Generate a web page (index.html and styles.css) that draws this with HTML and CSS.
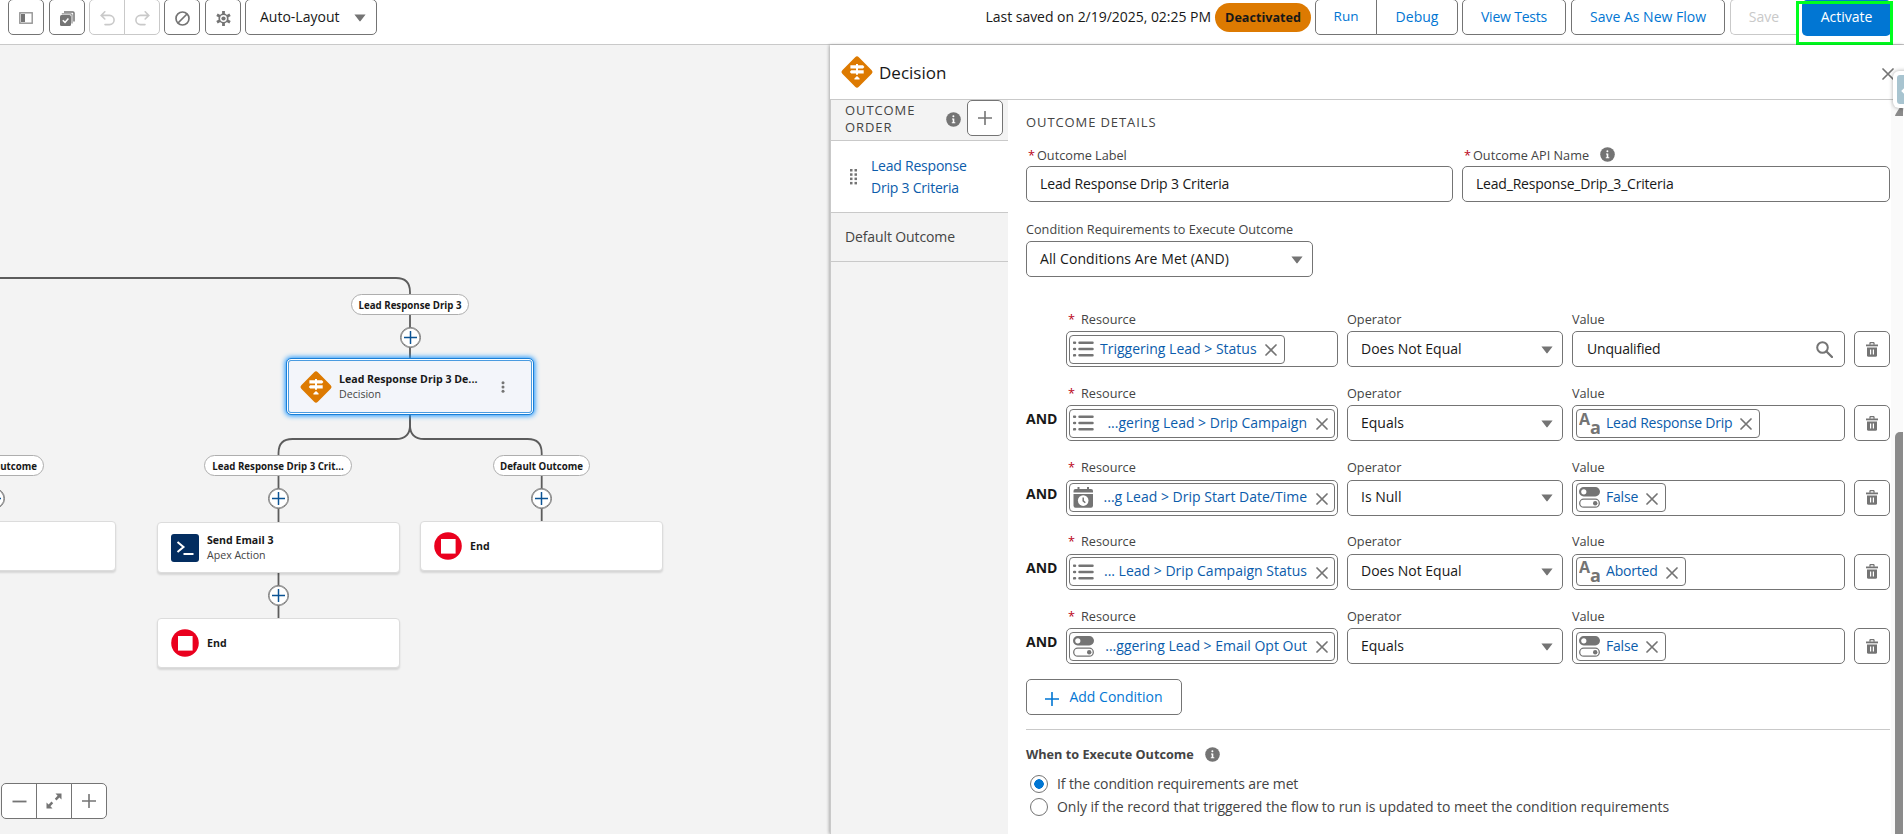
FILE: index.html
```html
<html>
	<head>
	<meta charset="utf-8">
	<title>Flow Builder</title>
	<link rel="stylesheet" href="styles.css">
	</head>
	<body>
	<svg class="defs">
		<symbol id="x" viewBox="0 0 12 12"><path d="M1 1L11 11M11 1L1 11" stroke="currentColor" stroke-width="1.7" stroke-linecap="round"/></symbol>
		<symbol id="plus" viewBox="0 0 14 14"><path d="M7 .5V13.5M.5 7H13.5" stroke="currentColor" stroke-width="1.6" stroke-linecap="round"/></symbol>
		<symbol id="info" viewBox="0 0 15 15"><circle cx="7.5" cy="7.5" r="7.3" fill="#747474"/><circle cx="7.4" cy="4.3" r="1" fill="#fff"/><path d="M6 6.4H8.3V10.3H9.3V11.2H5.8V10.3H6.7V7.4H6Z" fill="#fff"/></symbol>
		<symbol id="list" viewBox="0 0 21 16"><path d="M1 1.7H2M1 8H2M1 14.3H2M6.5 1.7H19.5M6.5 8H19.5M6.5 14.3H19.5" stroke="#747474" stroke-width="2.5" stroke-linecap="round"/></symbol>
		<symbol id="toggle" viewBox="0 0 21 21"><rect x="0" y="0" width="21" height="9.5" rx="4.7" fill="#747474"/><circle cx="4.8" cy="4.8" r="2.6" fill="#fff"/><rect x=".7" y="12.2" width="19.6" height="8" rx="4" fill="#fff" stroke="#747474" stroke-width="1.3"/><circle cx="16.2" cy="16.2" r="2.2" fill="#747474"/></symbol>
		<symbol id="text" viewBox="0 0 21 21"><text class="aa" x="0" y="11.5" font-size="16">A</text><text class="aa" x="11" y="20.5" font-size="18">a</text></symbol>
		<symbol id="date" viewBox="0 0 21 21"><path d="M5.5 0V4M15 0V4" stroke="#747474" stroke-width="2"/><path d="M.5 5.5V4Q.5 2 2.5 2H18Q20 2 20 4V5.5Z" fill="#747474"/><path d="M.5 7H20V18.5Q20 20.7 18 20.7H2.5Q.5 20.7 .5 18.5Z" fill="#747474"/><circle cx="10.2" cy="13.6" r="5.3" fill="#fff"/><path d="M10.2 10.5V13.8L12.3 15.7" fill="none" stroke="#747474" stroke-width="1.5"/></symbol>
		<symbol id="trash" viewBox="0 0 12 15"><path d="M4 2.8V1.2Q4 .6 4.6 .6H7.4Q8 .6 8 1.2V2.8" fill="none" stroke="#747474" stroke-width="1.3"/><path d="M0 2.5H12V4.3H0Z" fill="#747474"/><path d="M1 5.6H11V13.3Q11 14.8 9.5 14.8H2.5Q1 14.8 1 13.3Z" fill="#747474"/><path d="M4.6 7.5V12.5M7.4 7.5V12.5" stroke="#fff" stroke-width="1.2"/></symbol>
		<symbol id="down" viewBox="0 0 12 8"><path d="M.4 .4H11.6L6.6 7Q6 7.8 5.4 7Z" fill="#747474"/></symbol>
		<symbol id="decision" viewBox="0 0 34 34"><rect x="5.3" y="5.3" width="23.4" height="23.4" rx="2.6" fill="#dd7a01" transform="rotate(45 17 17)"/><path d="M16 9H18V10.2H23L24.4 11.9L23 13.6H18V15.2H23.7V18.6H18V19.7H16V18.6H11.2L9.8 16.9L11.2 15.2H16V13.6H10.4V10.2H16ZM17 21L19.6 23.4V24.4H14.4V23.4Z" fill="#fff"/></symbol>
		<symbol id="end" viewBox="0 0 28 28"><circle cx="14" cy="14" r="13.8" fill="#ea001e"/><rect x="7" y="7" width="14.6" height="14.6" fill="#fff"/></symbol>
	</svg>

	<div class="toolbar">
		<button class="btn icon-btn"><svg width="14" height="12"><rect x=".8" y=".8" width="12.4" height="10.4" fill="none" stroke="#939393" stroke-width="1.4"/><rect x="2" y="2" width="4" height="8" fill="#747474"/></svg></button>
		<button class="btn icon-btn"><svg width="15" height="15"><path d="M4 .9H13Q14 .9 14 1.9V10.5" fill="none" stroke="#747474" stroke-width="1.5"/><path d="M1.8 2.9H11Q12 2.9 12 3.9V12.5" fill="none" stroke="#747474" stroke-width="1"/><rect x="0" y="4" width="11" height="11" rx="1.5" fill="#747474"/><path d="M2.8 9.2L5 11.4L8.4 7.4" fill="none" stroke="#fff" stroke-width="1.5"/></svg></button>
		<div class="group">
			<button class="btn icon-btn off"><svg width="15" height="15"><path d="M4.8 .8L1.2 4.4L4.8 8M1.4 4.4H9.5A4.6 4.6 0 0 1 9.5 13.6H5" fill="none" stroke="#c9c9c9" stroke-width="1.6" stroke-linecap="round"/></svg></button>
			<button class="btn icon-btn off"><svg width="15" height="15"><path d="M10.2 .8L13.8 4.4L10.2 8M13.6 4.4H5.5A4.6 4.6 0 0 0 5.5 13.6H10" fill="none" stroke="#c9c9c9" stroke-width="1.6" stroke-linecap="round"/></svg></button>
		</div>
		<button class="btn icon-btn"><svg width="15" height="15"><circle cx="7.5" cy="7.5" r="6.5" fill="none" stroke="#747474" stroke-width="1.7"/><path d="M3 12L12 3" stroke="#747474" stroke-width="1.7"/></svg></button>
		<button class="btn icon-btn"><svg width="15" height="15"><circle cx="7.5" cy="7.5" r="5" fill="#747474"/><path d="M7.5 0V15M1 3.75L14 11.25M14 3.75L1 11.25" stroke="#747474" stroke-width="2.8"/><circle cx="7.5" cy="7.5" r="3.4" fill="#fff"/><circle cx="7.5" cy="7.5" r="2.1" fill="#747474"/></svg></button>
		<button class="btn layout"><span>Auto-Layout</span><svg width="12" height="8"><use href="#down"/></svg></button>
		<span class="saved">Last saved on 2/19/2025, 02:25 PM</span>
		<span class="badge">Deactivated</span>
		<div class="group run-group">
			<button class="btn blue run">Run</button>
			<button class="btn blue debug">Debug</button>
		</div>
		<button class="btn blue tests">View Tests</button>
		<button class="btn blue saveas">Save As New Flow</button>
		<button class="btn off save">Save</button>
		<button class="btn activate">Activate</button>
		<div class="highlight"></div>
	</div>

	<div class="main">
		<div class="canvas">
			<svg class="lines" width="830" height="789" fill="none" stroke="#5c5c5c" stroke-width="1.8">
				<path d="M0 233H396Q410 233 410 247V313"/>
				<path d="M410 369V380Q410 394 396 394H292.5Q278.5 394 278.5 408V573"/>
				<path d="M410 369V380Q410 394 424 394H527.7Q541.7 394 541.7 408V480"/>
			</svg>
			<div class="pill-label l1">Lead Response Drip 3</div>
			<div class="pill-label l2">Lead Response Drip 3 Crit...</div>
			<div class="pill-label l3">Default Outcome</div>
			<div class="pill-label l4">Default Outcome</div>
			<div class="add a1"><svg width="13" height="13"><use href="#plus"/></svg></div>
			<div class="add a2"><svg width="13" height="13"><use href="#plus"/></svg></div>
			<div class="add a3"><svg width="13" height="13"><use href="#plus"/></svg></div>
			<div class="add a4"><svg width="13" height="13"><use href="#plus"/></svg></div>
			<div class="card selected">
				<svg width="34" height="34"><use href="#decision"/></svg>
				<div class="card-text"><b>Lead Response Drip 3 De...</b><span>Decision</span></div>
				<svg class="dots" width="4" height="12" fill="#747474"><circle cx="2" cy="1.7" r="1.5"/><circle cx="2" cy="6" r="1.5"/><circle cx="2" cy="10.3" r="1.5"/></svg>
			</div>
			<div class="card c1">
				<svg width="28" height="28"><rect width="28" height="28" rx="3" fill="#032d60"/><path d="M6.5 8L12.5 13L6.5 18M12.5 20H22.5" fill="none" stroke="#fff" stroke-width="2"/></svg>
				<div class="card-text"><b>Send Email 3</b><span>Apex Action</span></div>
			</div>
			<div class="add a5"><svg width="13" height="13"><use href="#plus"/></svg></div>
			<div class="card c2"><svg width="28" height="28"><use href="#end"/></svg><div class="card-text"><b>End</b></div></div>
			<div class="card c3"><svg width="28" height="28"><use href="#end"/></svg><div class="card-text"><b>End</b></div></div>
			<div class="card c4"></div>
			<div class="group zoom">
				<button class="btn icon-btn"><svg width="15" height="15"><path d="M.5 7.5H14.5" stroke="#747474" stroke-width="1.8"/></svg></button>
				<button class="btn icon-btn"><svg width="16" height="16"><path d="M9.5 .5H15.5V6.5L13.4 4.5L10.5 7.4L8.8 5.7L11.6 2.7ZM6.5 15.5H.5V9.5L2.6 11.5L5.5 8.6L7.2 10.3L4.4 13.3Z" fill="#747474"/></svg></button>
				<button class="btn icon-btn"><svg width="14" height="14"><use href="#plus"/></svg></button>
			</div>
		</div>

		<div class="panel">
			<div class="panel-head">
				<svg width="34" height="34"><use href="#decision"/></svg>
				<h1>Decision</h1>
				<svg class="close" width="12" height="12"><use href="#x"/></svg>
			</div>
			<div class="panel-body">
				<div class="side">
					<div class="side-head">
						<h2>OUTCOME ORDER</h2>
						<svg width="15" height="15"><use href="#info"/></svg>
						<button class="btn icon-btn"><svg width="14" height="14"><use href="#plus"/></svg></button>
					</div>
					<div class="outcome active">
						<svg width="8" height="16" fill="#747474"><rect x="0" y="0" width="2.5" height="2.5"/><rect x="4.5" y="0" width="2.5" height="2.5"/><rect x="0" y="4.3" width="2.5" height="2.5"/><rect x="4.5" y="4.3" width="2.5" height="2.5"/><rect x="0" y="8.6" width="2.5" height="2.5"/><rect x="4.5" y="8.6" width="2.5" height="2.5"/><rect x="0" y="12.9" width="2.5" height="2.5"/><rect x="4.5" y="12.9" width="2.5" height="2.5"/></svg>
						<span>Lead Response<br>Drip 3 Criteria</span>
					</div>
					<div class="outcome"><span>Default Outcome</span></div>
				</div>
				<div class="details">
					<h2>OUTCOME DETAILS</h2>
					<div class="names">
						<div><div class="label"><i>*</i><span>Outcome Label</span></div><div class="field">Lead Response Drip 3 Criteria</div></div>
						<div><div class="label"><i>*</i><span>Outcome API Name</span><svg width="15" height="15"><use href="#info"/></svg></div><div class="field api">Lead_Response_Drip_3_Criteria</div></div>
					</div>
					<div class="label req"><span>Condition Requirements to Execute Outcome</span></div>
					<div class="field logic"><span>All Conditions Are Met (AND)</span><svg width="12" height="8"><use href="#down"/></svg></div>

					<div class="conditions">
						<div class="row">
							<div class="and"></div>
							<div><div class="label res"><i>*</i><span>Resource</span></div><div class="field has-pill"><div class="pill"><svg width="21" height="16"><use href="#list"/></svg><span>Triggering Lead &gt; Status</span><svg class="rm" width="12" height="12"><use href="#x"/></svg></div></div></div>
							<div><div class="label"><span>Operator</span></div><div class="field"><span>Does Not Equal</span><svg width="12" height="8"><use href="#down"/></svg></div></div>
							<div><div class="label"><span>Value</span></div><div class="field val-text"><span>Unqualified</span><svg class="search" width="17" height="17"><circle cx="6.5" cy="6.5" r="5.3" fill="none" stroke="#747474" stroke-width="2"/><path d="M10.5 10.5L16 16" stroke="#747474" stroke-width="2.3" stroke-linecap="round"/></svg></div></div>
							<button class="btn icon-btn"><svg width="12" height="15"><use href="#trash"/></svg></button>
						</div>
						<div class="row">
							<div class="and">AND</div>
							<div><div class="label res"><i>*</i><span>Resource</span></div><div class="field has-pill"><div class="pill full"><svg width="21" height="16"><use href="#list"/></svg><span>...gering Lead &gt; Drip Campaign</span><svg class="rm" width="12" height="12"><use href="#x"/></svg></div></div></div>
							<div><div class="label"><span>Operator</span></div><div class="field"><span>Equals</span><svg width="12" height="8"><use href="#down"/></svg></div></div>
							<div><div class="label"><span>Value</span></div><div class="field has-pill val"><div class="pill"><svg width="21" height="21"><use href="#text"/></svg><span>Lead Response Drip</span><svg class="rm" width="12" height="12"><use href="#x"/></svg></div></div></div>
							<button class="btn icon-btn"><svg width="12" height="15"><use href="#trash"/></svg></button>
						</div>
						<div class="row">
							<div class="and">AND</div>
							<div><div class="label res"><i>*</i><span>Resource</span></div><div class="field has-pill"><div class="pill full"><svg width="21" height="21"><use href="#date"/></svg><span>...g Lead &gt; Drip Start Date/Time</span><svg class="rm" width="12" height="12"><use href="#x"/></svg></div></div></div>
							<div><div class="label"><span>Operator</span></div><div class="field"><span>Is Null</span><svg width="12" height="8"><use href="#down"/></svg></div></div>
							<div><div class="label"><span>Value</span></div><div class="field has-pill val"><div class="pill"><svg width="21" height="21"><use href="#toggle"/></svg><span>False</span><svg class="rm" width="12" height="12"><use href="#x"/></svg></div></div></div>
							<button class="btn icon-btn"><svg width="12" height="15"><use href="#trash"/></svg></button>
						</div>
						<div class="row">
							<div class="and">AND</div>
							<div><div class="label res"><i>*</i><span>Resource</span></div><div class="field has-pill"><div class="pill full"><svg width="21" height="16"><use href="#list"/></svg><span>... Lead &gt; Drip Campaign Status</span><svg class="rm" width="12" height="12"><use href="#x"/></svg></div></div></div>
							<div><div class="label"><span>Operator</span></div><div class="field"><span>Does Not Equal</span><svg width="12" height="8"><use href="#down"/></svg></div></div>
							<div><div class="label"><span>Value</span></div><div class="field has-pill val"><div class="pill"><svg width="21" height="21"><use href="#text"/></svg><span>Aborted</span><svg class="rm" width="12" height="12"><use href="#x"/></svg></div></div></div>
							<button class="btn icon-btn"><svg width="12" height="15"><use href="#trash"/></svg></button>
						</div>
						<div class="row">
							<div class="and">AND</div>
							<div><div class="label res"><i>*</i><span>Resource</span></div><div class="field has-pill"><div class="pill full"><svg width="21" height="21"><use href="#toggle"/></svg><span>...ggering Lead &gt; Email Opt Out</span><svg class="rm" width="12" height="12"><use href="#x"/></svg></div></div></div>
							<div><div class="label"><span>Operator</span></div><div class="field"><span>Equals</span><svg width="12" height="8"><use href="#down"/></svg></div></div>
							<div><div class="label"><span>Value</span></div><div class="field has-pill val"><div class="pill"><svg width="21" height="21"><use href="#toggle"/></svg><span>False</span><svg class="rm" width="12" height="12"><use href="#x"/></svg></div></div></div>
							<button class="btn icon-btn"><svg width="12" height="15"><use href="#trash"/></svg></button>
						</div>
					</div>
					<button class="btn blue add-cond"><svg width="14" height="14"><use href="#plus"/></svg><span>Add Condition</span></button>
					<div class="when">
						<h3><span>When to Execute Outcome</span><svg width="15" height="15"><use href="#info"/></svg></h3>
						<div class="radio on"><em></em><span>If the condition requirements are met</span></div>
						<div class="radio"><em></em><span>Only if the record that triggered the flow to run is updated to meet the condition requirements</span></div>
					</div>
				</div>
				<div class="scroll"><svg width="12" height="9"><path d="M0 9Q0 8 1 6.5L4.5 1Q6 -.5 7.5 1L11 6.5Q12 8 12 9Z" fill="#8b8b8b"/></svg><div class="thumb"></div></div>
			</div>
			<div class="widget"><div><svg width="8" height="14"><path d="M8 3L4 7L8 11" fill="none" stroke="#fff" stroke-width="2.5"/></svg></div></div>
		</div>
	</div>
	</body>
</html>
```
FILE: styles.css
```css
body{margin: 0;height: 834px;overflow: hidden;font-family: "Open Sans", "Noto Sans", sans-serif;font-size: 14px;color: #181818;background-color: #fff;}
*{box-sizing: border-box;}
svg{flex: none;display: block;}
.defs{display: none;}
h1, h2, h3{margin: 0;font-weight: 400;}
.aa{font-family: "Open Sans", sans-serif;font-weight: 700;fill: #747474;}

.btn{
	display: flex;align-items: center;justify-content: center;
	height: 36px;flex: none;
	padding: 0;
	border: 1px solid #747474;
	border-radius: 5px;
	background-color: #fff;
	color: #747474;
	font-family: inherit;
	font-size: 14px;
	white-space: nowrap;
}
.icon-btn{width: 36px;}
.blue{color: #0176d3;}
.off{border-color: #c9c9c9;color: #c9c9c9;}
.group{display: flex;}
.group .btn{border-radius: 0;margin-left: -1px;}
.group .btn:first-child{border-radius: 5px 0 0 5px;margin-left: 0;}
.group .btn:last-child{border-radius: 0 5px 5px 0;}

.toolbar{
	position: relative;
	display: flex;align-items: flex-start;
	height: 45px;
	padding-left: 8px;
	border-bottom: 1px solid #c9c9c9;
}
.toolbar > *{margin-top: -1px;}
.toolbar > .icon-btn{margin-right: 5px;}
.toolbar .icon-btn svg{margin-top: 2px;}
.toolbar > .group{margin: -1px 4px 0 -1px;}
.toolbar .layout{width: 132px;justify-content: space-between;margin-left: -1px;padding: 0 10px 0 14px;color: #181818;}
.layout span{padding-bottom: 1px;}
.layout svg{margin-top: 2px;}
.toolbar .saved{margin: 7px 4px 0 auto;line-height: 19px;white-space: nowrap;letter-spacing: -.03px;}
.toolbar .badge{
	width: 96px;height: 29px;margin-top: 3px;
	border-radius: 15px;
	background-color: #dd7a01;
	font-size: 12.6px;font-weight: 700;line-height: 30px;text-align: center;
}
.toolbar .run-group{margin: -1px 4px 0;}
.run, .debug, .tests, .saveas, .save, .activate{padding-bottom: 2px;}
.run{width: 62px;font-size: 13.5px;}
.debug{width: 82px;}
.tests{width: 104px;margin-right: 5px;letter-spacing: -.2px;}
.saveas{width: 154px;margin-right: 5px;}
.save{width: 67px;border-right: 0;border-radius: 5px 0 0 5px;}
.activate{width: 89px;margin: 0 13px 0 5px;border: 0;padding-bottom: 3px;background-color: #0176d3;color: #fff;}
.highlight{position: absolute;left: 1796px;top: 2px;width: 97px;height: 44px;border: 3px solid #00ff1e;}

.main{display: flex;height: 789px;}
.canvas{position: relative;width: 830px;overflow: hidden;background-color: #f3f3f3;}
.lines{position: absolute;left: 0;top: 0;}
.pill-label{
	position: absolute;height: 21px;
	border: 1px solid #aeaeae;
	border-radius: 11px;
	background-color: #fff;
	font-size: 9.7px;font-weight: 700;line-height: 21px;text-align: center;white-space: nowrap;
}
.l1{left: 351px;top: 249px;width: 118px;}
.l2{left: 204px;top: 410px;width: 148px;}
.l3{left: 493px;top: 410px;width: 97px;}
.l4{left: -53px;top: 410px;width: 97px;}
.add{
	position: absolute;width: 21px;height: 21px;
	display: flex;align-items: center;justify-content: center;
	border: 1px solid #747474;
	border-radius: 50%;
	background-color: #fff;
	box-shadow: inset 0 0 0 .5px #747474;
	color: #0b5394;
}
.a1{left: 399.5px;top: 282px;}
.a2{left: 268px;top: 443px;}
.a3{left: 531px;top: 443px;}
.a4{left: -16px;top: 443px;}
.a5{left: 268px;top: 540px;}
.card{
	position: absolute;
	display: flex;align-items: center;
	height: 50px;width: 243px;
	padding-left: 13px;
	border: 1px solid #dcdcdc;
	border-radius: 4px;
	background-color: #fff;
	box-shadow: 0 2px 2px rgba(0, 0, 0, .12);
}
.card-text{display: flex;flex-direction: column;margin: 1px 0 0 8px;font-size: 10.6px;line-height: 15px;white-space: nowrap;}
.card-text span{color: #444;}
.c1{left: 157px;top: 477px;height: 51px;}
.c2{left: 157px;top: 573px;}
.c3{left: 420px;top: 476px;}
.c4{left: -127px;top: 476px;}
.selected{
	left: 286px;top: 313px;width: 248px;height: 57px;
	padding-left: 12px;
	border: 1px solid #1b7fd6;
	border-radius: 5px;
	background-color: #f3f5fa;
	box-shadow: inset 0 0 0 1px #fff, inset 0 0 0 2px #4a9be0, 0 0 5px 1px #1b96ff;
}
.selected .card-text{margin-left: 6px;}
.dots{margin-left: 24px;}
.zoom{position: absolute;left: 1px;top: 738px;}

.panel{position: relative;width: 1074px;display: flex;flex-direction: column;overflow: hidden;box-shadow: -1px 0 3px rgba(0, 0, 0, .3);background-color: #fff;}
.panel-head{display: flex;flex: none;align-items: center;height: 55px;padding: 0 10px 0 10px;border-bottom: 1px solid #c9c9c9;}
.panel-head h1{margin-left: 5px;font-size: 17px;}
.close{margin-left: auto;margin-top: 3px;color: #747474;}
.panel-body{display: flex;height: 734px;}
.side{width: 178px;border-left: 1px solid #c9c9c9;background-color: #f3f3f3;color: #444;}
.side-head{display: flex;height: 41px;padding: 0 5px 0 14px;border-bottom: 1px solid #c9c9c9;}
.side-head h2{width: 101px;font-size: 13px;line-height: 17px;padding-top: 2px;}
.side-head > svg{margin: 12px 6px 0 0;}
h2{letter-spacing: .9px;}
.outcome{display: flex;align-items: center;height: 49px;padding-left: 14px;border-bottom: 1px solid #c9c9c9;line-height: 22px;letter-spacing: -.12px;}
.outcome.active{height: 72px;padding-left: 19px;background-color: #fff;color: #0b5cab;letter-spacing: -.22px;}
.outcome.active span{margin-left: 13px;}

.details{width: 864px;margin-left: 18px;}
.details h2{height: 55px;padding-top: 13px;font-size: 13px;line-height: 18px;color: #444;}
.label{display: flex;align-items: center;height: 22px;margin-top: -11px;padding-bottom: 1px;color: #444;font-size: 12.7px;white-space: nowrap;}
.label i{margin: 0 2px 0 2px;color: #ba0517;font-style: normal;}
.label svg{margin: -1px 0 0 11px;}
.label.res i{margin-right: 6px;}
.names{display: grid;grid-template-columns: 427px 428px;gap: 9px;letter-spacing: -.14px;}
.names .label{letter-spacing: 0;}
.field{
	display: flex;align-items: center;justify-content: space-between;
	height: 36px;
	padding: 0 9px 2px 13px;
	border: 1px solid #747474;
	border-radius: 5px;
	white-space: nowrap;
}
.field > svg{margin-top: 3px;}
.api{letter-spacing: -.2px;}
.label.req{margin-top: 17px;padding-bottom: 2px;}
.logic{width: 287px;letter-spacing: .1px;}
.conditions{margin-top: 31px;}
.row{display: grid;grid-template-columns: 31px 272px 216px 273px 36px;gap: 9px;height: 74.250px;align-items: start;}
.row .label{margin: 0;height: 23px;padding-bottom: 2px;}
.row > .btn{margin-top: 23px;}
.and{padding-top: 27px;font-weight: 700;}
.has-pill{padding: 0 2px;}
.val{padding: 0 3px;letter-spacing: -.2px;}
.val-text{padding-left: 14px;letter-spacing: -.2px;}
.search{margin-right: 2px;}
.pill{
	display: flex;align-items: center;
	height: 29px;
	padding: 0 7px 0 3px;
	border: 1px solid #747474;
	border-radius: 4px;
	color: #0b5cab;
}
.pill span{margin-left: 6px;padding-bottom: 2px;}
.val .pill{padding-left: 2px;}
.full{width: 266px;}
.full span{margin-left: auto;}
.rm{margin: 2px 0 0 8px;color: #747474;}
.full .rm{margin-left: 9px;margin-right: -1px;}
.add-cond{width: 156px;}
.add-cond svg{margin: 3px 10px 0 0;}
.add-cond span{padding-bottom: 2px;}
.when{margin-top: 14px;padding-top: 13px;border-top: 1px solid #c9c9c9;color: #444;}
.when h3{display: flex;align-items: center;height: 22px;font-size: 12.7px;font-weight: 700;}
.when h3 svg{margin-left: 11px;}
.radio{display: flex;align-items: center;height: 23px;padding-left: 4px;white-space: nowrap;letter-spacing: -.04px;}
.on{margin-top: 7px;letter-spacing: -.12px;}
.radio em{width: 18px;height: 18px;border: 1px solid #747474;border-radius: 50%;margin-right: 9px;}
.on em{background: radial-gradient(circle, #0176d3 4.500px, #fff 5px);}

.scroll{width: 12px;margin-left: 1px;padding: 7px 0 0 4px;background-color: #fafafa;overflow: hidden;}
.thumb{width: 12px;height: 500px;margin-top: 316px;border-radius: 5px;background-color: #8b8b8b;}
.widget{
	position: absolute;left: 1063px;top: 26px;width: 30px;height: 37px;
	padding: 4px;
	border-radius: 6px;
	background-color: #fff;
	box-shadow: 0 0 4px rgba(0, 0, 0, .35);
}
.widget div{height: 29px;padding: 9px 0 0 2px;border-radius: 3px;background-color: #a8c4d0;}
```
